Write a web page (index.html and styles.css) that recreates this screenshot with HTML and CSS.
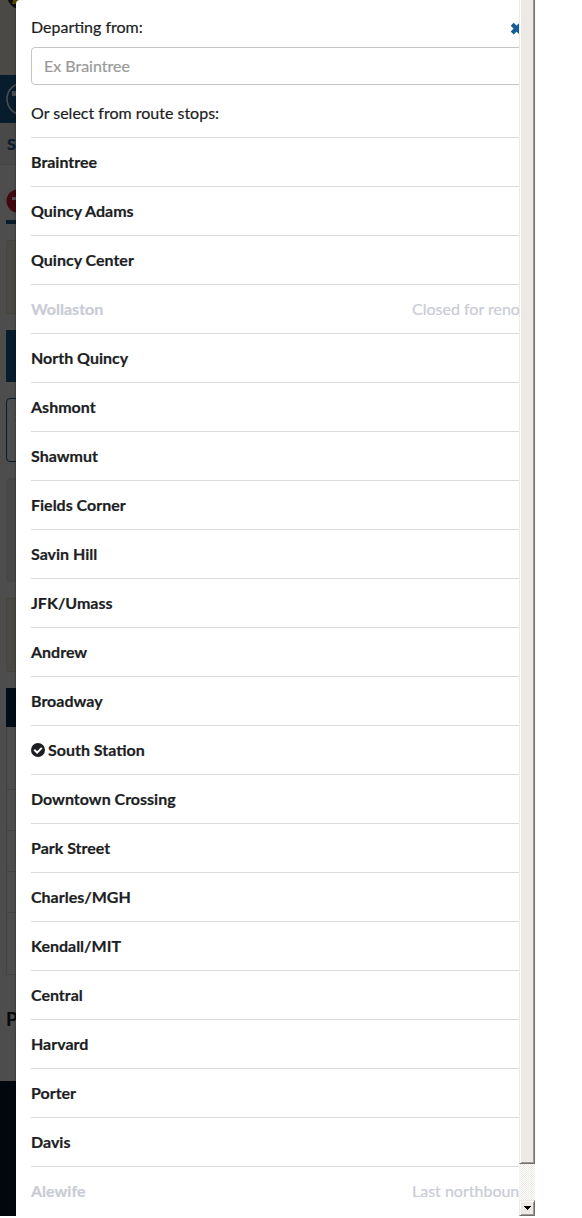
FILE: index.html
```html
<!DOCTYPE html>
<html lang="en">
<head>
<meta charset="utf-8">
<title>Departing from</title>
<link rel="stylesheet" href="styles.css">
</head>
<body>
<div class="window">
  <aside class="page">
    <div class="banner"><svg width="20" height="28" viewBox="0 0 20 28"><circle cx="21" cy="-5" r="14" fill="#0a0b0b"/><path d="M14-3h6v7h-8z" fill="#594600"/></svg></div>
    <div class="brand"><svg width="20" height="48" viewBox="0 0 20 48"><circle cx="23" cy="24" r="16" fill="none" stroke="#484d51" stroke-width="1.6"/><path d="M12 16h8v5h-8z" fill="#484d51"/></svg></div>
    <div class="subnav">S</div>
    <div class="body">
      <svg class="line" width="14" height="24" viewBox="0 0 14 24"><circle cx="12" cy="12" r="11.5" fill="#42080f"/><path d="M6 8h8v3H6z" fill="#565052"/></svg>
      <div class="tab"></div>
      <div class="notice"></div>
      <div class="action"></div>
      <div class="field">S</div>
      <div class="card"></div>
      <div class="notice"></div>
      <div class="table">
        <div class="head"></div><div class="cell first"></div><div class="cell"></div><div class="cell"></div><div class="cell"></div><div class="cell tall"></div>
      </div>
      <div class="heading">P</div>
    </div>
    <div class="footer"></div>
  </aside>
  <main class="modal">
    <div class="content">
      <header class="title"><span>Departing from:</span><svg class="close" width="14" height="14" viewBox="0 0 14 14"><path d="M2.2 2.2 11 11M11 2.2 2.2 11" stroke="#165c96" stroke-width="4.2"/></svg></header>
      <div class="search">Ex Braintree</div>
      <p class="prompt">Or select from route stops:</p>
      <ul class="stops">
        <li>Braintree</li>
        <li>Quincy Adams</li>
        <li>Quincy Center</li>
        <li class="off">Wollaston<span class="note">Closed for reno</span></li>
        <li>North Quincy</li>
        <li>Ashmont</li>
        <li>Shawmut</li>
        <li>Fields Corner</li>
        <li>Savin Hill</li>
        <li>JFK/Umass</li>
        <li>Andrew</li>
        <li>Broadway</li>
        <li><svg class="check" width="14" height="14" viewBox="0 0 14 14"><circle cx="7" cy="7" r="7" fill="#1c1e23"/><path d="m3.3 6.8 2.8 2.8 4.7-4.7" fill="none" stroke="#fff" stroke-width="2"/></svg>South Station</li>
        <li>Downtown Crossing</li>
        <li>Park Street</li>
        <li>Charles/MGH</li>
        <li>Kendall/MIT</li>
        <li>Central</li>
        <li>Harvard</li>
        <li>Porter</li>
        <li>Davis</li>
        <li class="off">Alewife<span class="note">Last northboun</span></li>
      </ul>
    </div>
  </main>
  <div class="scrollbar">
    <div class="thumb"></div>
    <div class="track"></div>
    <div class="down"><svg width="7" height="4" viewBox="0 0 7 4" shape-rendering="crispEdges"><path d="M0 0h7v1H6v1H5v1H4v1H3V3H2V2H1V1H0z"/></svg></div>
  </div>
</div>
</body>
</html>
```
FILE: styles.css
```css
* { box-sizing: border-box; }
body { margin: 0; background: #fff; font: 16px/24px Lato, sans-serif; color: #1c1e23; -webkit-text-stroke: .2px; }
.window { display: flex; width: 535px; height: 1216px; overflow: hidden; }
svg { display: block; flex: none; }

.page { width: 20px; flex: none; overflow: hidden; background: #4d4d4d; display: flex; flex-direction: column; }
.page > * { flex: none; overflow: hidden; }
.banner { height: 75px; background: #4a4945; }
.brand { height: 48px; background: #071c2d; }
.subnav { height: 42px; padding: 9px 0 0 7px; background: #494949; border-bottom: 1px solid #444; color: #071c2d; font-weight: 700; }
.body { height: 916px; padding: 24px 0 0 6px; }
.tab { height: 4px; margin-top: 7px; background: #071c2d; }
.notice { height: 74px; margin-top: 16px; background: #4a4943; border: 1px solid #464540; border-right: 0; }
.action { height: 52px; margin-top: 16px; background: #071c2d; }
.field { height: 64px; margin-top: 16px; padding: 5px 0 0 8px; width: 40px; border: 1px solid #071c2d; border-radius: 4px; }
.card { height: 104px; width: 40px; margin-top: 16px; background: #484848; border: 1px solid #464646; border-radius: 4px; }
.table { margin-top: 16px; }
.head { height: 39px; background: #000c16; }
.cell { height: 41px; border: 1px solid #444; border-width: 0 0 1px 1px; }
.cell.first { height: 63px; }
.cell.tall { height: 62px; }
.heading { margin-top: 32px; font-size: 19px; font-weight: 700; color: #08090a; }
.footer { height: 135px; background: #00070d; }

.modal { position: relative; width: 503px; margin-left: -4px; flex: none; overflow: hidden; background: #fff; border-radius: 4px 0 0 0; box-shadow: 0 0 3px rgba(0, 0, 0, .4); }
.content { width: 570px; padding: 15px 15px 0; }
.title { display: flex; justify-content: space-between; width: 493px; height: 32px; align-items: flex-start; }
.close { margin-top: 7px; }
.search { height: 38px; padding: 6px 12px; border: 1px solid #c4c5c7; border-radius: 4px; color: #999; }
.prompt { margin: 16px 0 12px; }
.stops { margin: 0; padding: 0; list-style: none; }
.stops li { display: flex; align-items: center; height: 49px; border-top: 1px solid #d9dadc; font-weight: 700; }
.stops .off { color: #c9ccd4; }
.note { margin-left: auto; width: 159px; font-weight: 400; white-space: nowrap; }
.check { margin-right: 3px; }

.scrollbar { position: relative; width: 16px; flex: none; display: flex; flex-direction: column; background: #fff; }
.thumb { height: 1164px; background: #edeae5; border: solid; border-width: 0 1px 1px; border-color: #edeae5 #706f6d #706f6d #edeae5; box-shadow: inset 1px 0 #fff, inset -1px -1px #9d9b98; }
.track { height: 36px; background: repeating-conic-gradient(#edeae5 0 25%, #fff 0 50%) 0 0 / 2px 2px; }
.down { height: 16px; display: flex; align-items: center; justify-content: center; background: #edeae5; border: 1px solid; border-color: #edeae5 #706f6d #706f6d #edeae5; box-shadow: inset 1px 1px #fff, inset -1px -1px #9d9b98; }
```
